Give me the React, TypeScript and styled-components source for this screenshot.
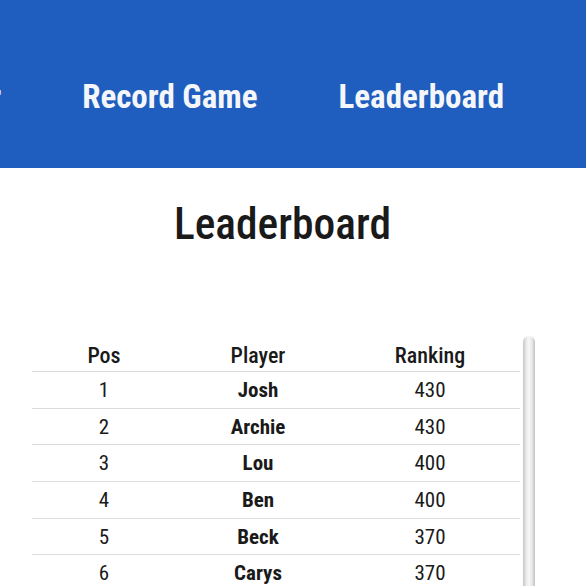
import React from "react";
import styled, { createGlobalStyle } from "styled-components";

const Global = createGlobalStyle`
  html, body { margin: 0; padding: 0; background: #fff; }
  body { font-family: "Roboto Condensed", "Roboto", "Liberation Sans", sans-serif; font-stretch: condensed; color: #1a1a1a; overflow: hidden; }
`;

const Header = styled.header`
  box-sizing: border-box;
  height: 168px;
  padding: 24px 82px 0 0;
  background: #1f5dbe;
  display: flex;
  align-items: center;
  justify-content: flex-end;
  gap: 81px;
  overflow: hidden;
`;

const NavItem = styled.a`
  flex: none;
  color: #f4f6fa;
  font-size: 33px;
  font-weight: 700;
  text-decoration: none;
  white-space: nowrap;
`;

const Title = styled.h1`
  margin: 34px 0 0;
  padding-right: 21px;
  text-align: center;
  font-size: 43.5px;
  font-weight: 500;
  line-height: 46px;
  color: #1a1a1a;
`;

const TableArea = styled.div`
  margin: 88px 0 0 32px;
  width: 504px;
  height: 420px;
  display: flex;
  align-items: flex-start;
  overflow: hidden;
`;

const Table = styled.table`
  flex: none;
  width: 488px;
  border-collapse: collapse;
`;

const ScrollTrack = styled.div`
  flex: none;
  width: 16px;
  height: 100%;
  padding: 0 1px 0 3px;
  box-sizing: border-box;
`;

const Thumb = styled.div`
  height: 300px;
  border-radius: 6px 6px 0 0;
  background: linear-gradient(to right, #c6c6c6, #ececec 30%, #f6f6f6 50%, #e8e8e8 75%, #c2c2c2);
`;

const Th = styled.th<{ $w: number }>`
  width: ${(p) => p.$w}px;
  font-size: 22px;
  font-weight: 500;
  height: 32px;
  padding: 3px 0 0;
  border-bottom: 1px solid #dcdcdc;
  text-align: center;
`;

const Td = styled.td<{ $bold?: boolean }>`
  font-size: 21px;
  font-weight: ${(p) => (p.$bold ? 700 : 400)};
  height: 35.7px;
  padding: 0;
  border-bottom: 1px solid #dcdcdc;
  text-align: center;
`;

const rows: [number, string, number][] = [
  [1, "Josh", 430],
  [2, "Archie", 430],
  [3, "Lou", 400],
  [4, "Ben", 400],
  [5, "Beck", 370],
  [6, "Carys", 370],
  [7, "Dan", 340],
  [8, "Ellie", 320],
  [9, "Finn", 300],
  [10, "Grace", 280],
];

export default function App() {
  return (
    <>
      <Global />
      <Header>
        <NavItem href="#">Add Player</NavItem>
        <NavItem href="#">Record Game</NavItem>
        <NavItem href="#">Leaderboard</NavItem>
      </Header>
      <Title>Leaderboard</Title>
      <TableArea>
        <Table>
          <thead>
            <tr>
              <Th $w={144}>Pos</Th>
              <Th $w={164}>Player</Th>
              <Th $w={180}>Ranking</Th>
            </tr>
          </thead>
          <tbody>
            {rows.map(([pos, name, rank]) => (
              <tr key={pos}>
                <Td>{pos}</Td>
                <Td $bold>{name}</Td>
                <Td>{rank}</Td>
              </tr>
            ))}
          </tbody>
        </Table>
        <ScrollTrack>
          <Thumb />
        </ScrollTrack>
      </TableArea>
    </>
  );
}
